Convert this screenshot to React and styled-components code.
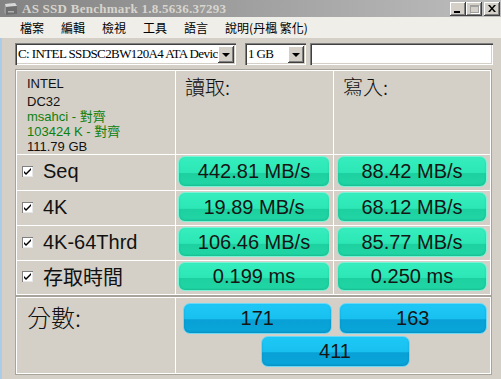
import styled, { createGlobalStyle } from "styled-components";

const GlobalStyle = createGlobalStyle`
  html, body {
    margin: 0;
    padding: 0;
    background: #d4d0c8;
  }
  * {
    box-sizing: border-box;
  }
`;

const CJK = `"Liberation Sans", "Noto Sans CJK TC", sans-serif`;

const menus = ["檔案", "編輯", "檢視", "工具", "語言", "說明(丹楓 繁化)"];

const info = [
  { text: "INTEL", green: false },
  { text: "DC32", green: false },
  { text: "msahci - 對齊", green: true },
  { text: "103424 K - 對齊", green: true },
  { text: "111.79 GB", green: false },
];

const tests = [
  { name: "Seq", read: "442.81 MB/s", write: "88.42 MB/s" },
  { name: "4K", read: "19.89 MB/s", write: "68.12 MB/s" },
  { name: "4K-64Thrd", read: "106.46 MB/s", write: "85.77 MB/s" },
  { name: "存取時間", read: "0.199 ms", write: "0.250 ms" },
];

const DriveIcon = () => (
  <svg width="15" height="14" viewBox="0 0 15 14">
    <path d="M2 2 L12 1 L14 4 L14 12 L3 13 L1 10 Z" fill="#9a9a9a" />
    <path d="M2 2 L12 1 L14 4 L3 5 Z" fill="#d8d8d8" />
    <path d="M3 5 L14 4 L14 12 L3 13 Z" fill="#6e6e6e" />
    <rect x="5" y="9" width="6" height="1.5" fill="#b0b0b0" />
  </svg>
);

const CheckMark = () => (
  <svg width="7" height="7" viewBox="0 0 7 7">
    <path d="M0 3 L2 5 L7 0 L7 2 L2 7 L0 5 Z" fill="#000" />
  </svg>
);

const App = () => {
  return (
    <>
      <GlobalStyle />
      <Window>
        <TitleBar>
          <DriveIcon />
          <TitleText>AS SSD Benchmark 1.8.5636.37293</TitleText>
          <CaptionGroup>
            <CaptionButton>
              <MinGlyph />
            </CaptionButton>
            <CaptionButton>
              <MaxGlyph />
            </CaptionButton>
            <CaptionButton $close>
              <svg width="8" height="7" viewBox="0 0 8 7">
                <path d="M0 0 L2 0 L4 2.5 L6 0 L8 0 L5 3.5 L8 7 L6 7 L4 4.5 L2 7 L0 7 L3 3.5 Z" fill="#000" />
              </svg>
            </CaptionButton>
          </CaptionGroup>
        </TitleBar>
        <MenuBar>
          {menus.map(m => (
            <MenuItem key={m}>{m}</MenuItem>
          ))}
        </MenuBar>
        <Body>
          <Toolbar>
            <Combo $w={221}>
              <ComboText>C: INTEL SSDSC2BW120A4 ATA Device</ComboText>
              <DropButton>
                <Arrow />
              </DropButton>
            </Combo>
            <Combo $w={61}>
              <ComboText>1 GB</ComboText>
              <DropButton>
                <Arrow />
              </DropButton>
            </Combo>
            <TextField />
          </Toolbar>

          <ResultGrid>
            <InfoCell>
              {info.map(l => (
                <InfoLine key={l.text} $green={l.green}>
                  {l.text}
                </InfoLine>
              ))}
            </InfoCell>
            <HeadCell>讀取:</HeadCell>
            <HeadCell>寫入:</HeadCell>
            {tests.map(t => (
              <TestRow key={t.name} t={t} />
            ))}
          </ResultGrid>

          <ScoreBox>
            <ScoreLabel>分數:</ScoreLabel>
            <ScoreCell>
              <ScorePair>
                <ScoreBar>171</ScoreBar>
                <ScoreBar>163</ScoreBar>
              </ScorePair>
              <ScoreBar>411</ScoreBar>
            </ScoreCell>
          </ScoreBox>
        </Body>
      </Window>
    </>
  );
};

const TestRow = ({ t }) => (
  <>
    <LabelCell>
      <CheckBox>
        <CheckMark />
      </CheckBox>
      <TestName>{t.name}</TestName>
    </LabelCell>
    <BarCell>
      <ValueBar>{t.read}</ValueBar>
    </BarCell>
    <BarCell $right>
      <ValueBar>{t.write}</ValueBar>
    </BarCell>
  </>
);

export default App;

const Window = styled.div`
  width: 501px;
  height: 379px;
  overflow: hidden;
  display: flex;
  flex-direction: column;
  background: #d4d0c8;
`;

const TitleBar = styled.div`
  height: 17px;
  display: flex;
  align-items: center;
  padding: 0 1px 0 3px;
  background: linear-gradient(to right, #838383, #bdbdbd);
`;

const TitleText = styled.div`
  flex: 1;
  margin-left: 4px;
  font-family: "Liberation Serif", serif;
  font-weight: bold;
  font-size: 13px;
  color: #d8d5cd;
  white-space: nowrap;
  letter-spacing: 0.25px;
`;

const CaptionGroup = styled.div`
  display: flex;
`;

const CaptionButton = styled.div`
  width: 16px;
  height: 14px;
  margin-left: ${p => (p.$close ? "2px" : "0")};
  background: #d4d0c8;
  display: flex;
  align-items: center;
  justify-content: center;
  box-shadow: inset -1px -1px #404040, inset 1px 1px #fff,
    inset -2px -2px #808080;
`;

const MinGlyph = styled.div`
  width: 6px;
  height: 2px;
  background: #000;
  margin-top: 6px;
  margin-left: -2px;
`;

const MaxGlyph = styled.div`
  width: 9px;
  height: 8px;
  border: 1px solid #a0a0a0;
  border-top-width: 2px;
  box-shadow: 1px 1px #fff;
`;

const MenuBar = styled.div`
  height: 21px;
  display: flex;
  align-items: center;
  padding-left: 11px;
  background: #efeee9;
`;

const MenuItem = styled.div`
  padding: 0 8px 0 9px;
  font-family: "Noto Sans CJK TC", sans-serif;
  font-size: 12px;
  line-height: 14px;
  color: #000;
  white-space: nowrap;
`;

const Body = styled.div`
  flex: 1;
  border-left: 2px solid #a9cde8;
  padding-left: 13px;
  display: flex;
  flex-direction: column;
`;

const Toolbar = styled.div`
  display: flex;
  align-items: center;
  padding-top: 5px;
  height: 27px;
`;

const Combo = styled.div`
  width: ${p => p.$w}px;
  height: 22px;
  margin-right: ${p => (p.$w > 100 ? 9 : 4)}px;
  background: #fff;
  display: flex;
  align-items: center;
  padding: 2px;
  box-shadow: inset 1px 1px #808080, inset 2px 2px #404040,
    inset -1px -1px #fff, inset -2px -2px #d4d0c8;
`;

const ComboText = styled.div`
  flex: 1;
  overflow: hidden;
  white-space: nowrap;
  font-family: "Liberation Serif", serif;
  font-size: 13px;
  letter-spacing: -0.6px;
  color: #000;
  padding-left: 1px;
`;

const DropButton = styled.div`
  width: 16px;
  height: 17px;
  flex-shrink: 0;
  background: #d4d0c8;
  display: flex;
  align-items: center;
  justify-content: center;
  box-shadow: inset -1px -1px #404040, inset 1px 1px #fff,
    inset -2px -2px #808080;
`;

const Arrow = styled.div`
  width: 0;
  height: 0;
  border-left: 4px solid transparent;
  border-right: 4px solid transparent;
  border-top: 4px solid #000;
  margin-top: 1px;
`;

const TextField = styled.div`
  width: 183px;
  height: 22px;
  background: #fff;
  box-shadow: inset 1px 1px #808080, inset 2px 2px #404040,
    inset -1px -1px #fff, inset -2px -2px #d4d0c8;
`;

const ResultGrid = styled.div`
  margin: 5px 0 0 1px;
  width: 475px;
  display: grid;
  grid-template-columns: 158px 157px 156px;
  grid-template-rows: 83px 35px 34px 34px 33px;
  gap: 1px;
  padding: 1px;
  background: #fff;
  outline: 1px solid #a8a49c;
`;

const Cell = styled.div`
  background: #d4d0c8;
`;

const InfoCell = styled(Cell)`
  padding: 5px 0 0 10px;
  display: flex;
  flex-direction: column;
`;

const InfoLine = styled.div`
  font-family: ${CJK};
  font-size: 13px;
  line-height: 15px;
  color: ${p => (p.$green ? "#0d800d" : "#111")};
  white-space: nowrap;
  &:first-child {
    margin-bottom: 3px;
  }
`;

const HeadCell = styled(Cell)`
  padding: 3px 0 0 9px;
  font-family: "Noto Sans CJK TC", sans-serif;
  font-weight: 300;
  font-size: 20px;
  line-height: 26px;
  color: #111;
`;

const LabelCell = styled(Cell)`
  display: flex;
  align-items: center;
  padding-left: 5px;
  padding-bottom: 2px;
`;

const CheckBox = styled.div`
  width: 11px;
  height: 11px;
  background: #fff;
  display: flex;
  align-items: center;
  justify-content: center;
  box-shadow: inset 1px 1px #808080, inset -1px -1px #e8e8e8;
`;

const TestName = styled.div`
  margin-left: 10px;
  font-family: ${CJK};
  font-size: 20px;
  color: #111;
  white-space: nowrap;
`;

const BarCell = styled(Cell)`
  display: flex;
  padding: 1px ${p => (p.$right ? "3px 3px 3px" : "3px 3px 2px")};
`;

const ValueBar = styled.div`
  flex: 1;
  border-radius: 7px;
  border: 1px solid #7cf3d6;
  background: linear-gradient(
    to bottom,
    #36edbe 0%,
    #2ce7b5 55%,
    #1dd0a0 57%,
    #21d6a5 100%
  );
  box-shadow: inset 0 -1px 2px rgba(0, 110, 80, 0.25);
  display: flex;
  align-items: center;
  justify-content: center;
  font-family: "Liberation Sans", sans-serif;
  font-size: 20px;
  color: #151515;
  white-space: nowrap;
`;

const ScoreBox = styled.div`
  margin: 2px 0 0 1px;
  width: 475px;
  height: 77px;
  display: grid;
  grid-template-columns: 158px 314px;
  gap: 1px;
  padding: 1px;
  background: #fff;
  outline: 1px solid #a8a49c;
`;

const ScoreLabel = styled(Cell)`
  padding: 4px 0 0 10px;
  font-family: "Noto Sans CJK TC", sans-serif;
  font-weight: 300;
  font-size: 24px;
  line-height: 30px;
  color: #111;
`;

const ScoreCell = styled(Cell)`
  display: flex;
  flex-direction: column;
  align-items: center;
  gap: 2px;
  padding: 5px 3px 0 7px;
`;

const ScorePair = styled.div`
  align-self: stretch;
  display: flex;
  gap: 7px;
`;

const ScoreBar = styled.div`
  width: 149px;
  height: 31px;
  border-radius: 7px;
  border: 1px solid #6ad8f7;
  background: linear-gradient(
    to bottom,
    #1ec8f6 0%,
    #18c0f0 52%,
    #08a0d6 54%,
    #0aa6da 100%
  );
  box-shadow: inset 0 -1px 2px rgba(0, 70, 120, 0.25);
  display: flex;
  align-items: center;
  justify-content: center;
  font-family: "Liberation Sans", sans-serif;
  font-size: 20px;
  color: #151515;
`;
